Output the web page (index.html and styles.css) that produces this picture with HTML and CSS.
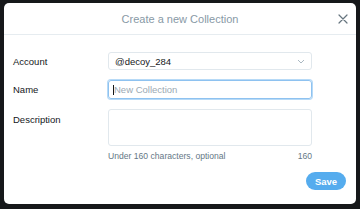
FILE: index.html
```html
<!DOCTYPE html>
<html lang="en">

<head>
    <meta charset="utf-8">
    <title>Create a new Collection</title>
    <link rel="stylesheet" href="styles.css">
</head>

<body>
    <section class="modal">
        <header class="modal-head">
            <h1>Create a new Collection</h1>
            <button class="luk" aria-label="Close">
                <svg width="10" height="10" viewBox="0 0 10 10">
                    <path d="M1 1L9 9M9 1L1 9" stroke="#66757f" stroke-width="1.2" stroke-linecap="round" />
                </svg>
            </button>
        </header>

        <form class="modal-body">
            <div class="row">
                <label>Account</label>
                <div class="select">
                    <span>@decoy_284</span>
                    <svg width="8" height="5" viewBox="0 0 8 5">
                        <path d="M1 1L4 4L7 1" stroke="#aab8c2" stroke-width="1" fill="none" />
                    </svg>
                </div>
            </div>
            <div class="row">
                <label>Name</label>
                <div class="input focus"><span class="caret"></span><span class="ph">New Collection</span></div>
            </div>
            <div class="row top">
                <label>Description</label>
                <div class="field">
                    <div class="textarea"></div>
                    <div class="hint">
                        <span>Under 160 characters, optional</span>
                        <span>160</span>
                    </div>
                </div>
            </div>
            <div class="actions">
                <button type="button" class="save">Save</button>
            </div>
        </form>
    </section>
</body>

</html>
```

FILE: styles.css
```css
body {
    margin: 0;
    width: 360px;
    height: 209px;
    background-color: #16181a;
    font-family: "Liberation Sans", Arial, sans-serif;
    overflow: hidden;
}

.modal {
    margin: 3px 4px 0 4px;
    width: 352px;
    height: 201px;
    background-color: #fff;
    border-radius: 5px;
}

.modal-head {
    height: 31px;
    border-bottom: 1px solid #e6ecf0;
    display: flex;
    align-items: center;
    justify-content: center;
    position: relative;
}

.modal-head h1 {
    margin: 0;
    font-size: 11px;
    font-weight: normal;
    color: #8899a6;
}

.luk {
    position: absolute;
    right: 8px;
    top: 11px;
    border: 0;
    background: none;
    padding: 0;
    width: 10px;
    height: 10px;
    display: flex;
}

.modal-body {
    padding: 17px 44px 0 9px;
}

.row {
    display: flex;
    align-items: center;
    margin-bottom: 10px;
}

.row.top {
    align-items: flex-start;
}

.row label {
    width: 95px;
    font-size: 9.5px;
    color: #14171a;
}

.row.top label {
    padding-top: 5px;
}

.select,
.input,
.textarea {
    box-sizing: border-box;
    width: 204px;
    border: 1px solid #e1e8ed;
    border-radius: 3px;
    font-size: 9.5px;
}

.select {
    height: 18px;
    display: flex;
    align-items: center;
    justify-content: space-between;
    padding: 0 6px;
    color: #14171a;
}

.input {
    height: 19px;
    display: flex;
    align-items: center;
    padding: 0 4px;
}

.input.focus {
    border-color: #8ec2f0;
    box-shadow: 0 0 0 1px #b7daf7;
}

.caret {
    width: 1px;
    height: 10px;
    background-color: #14171a;
}

.ph {
    color: #9aa9b4;
}

.field {
    width: 204px;
}

.textarea {
    height: 37px;
}

.hint {
    display: flex;
    justify-content: space-between;
    margin-top: 5px;
    font-size: 8.6px;
    color: #657786;
}

.actions {
    display: flex;
    justify-content: flex-end;
    margin-right: -34px;
    margin-top: 11px;
}

.save {
    width: 40px;
    height: 18px;
    border: 0;
    border-radius: 9px;
    background-color: #55acee;
    color: #fff;
    font-family: inherit;
    font-weight: bold;
    font-size: 9.5px;
    padding: 0;
}
```
